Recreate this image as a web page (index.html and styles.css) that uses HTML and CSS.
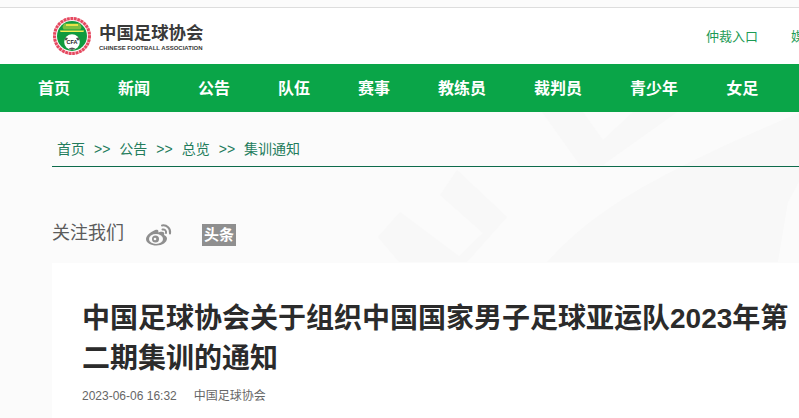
FILE: index.html
```html
<!DOCTYPE html>
<html lang="zh">
<head>
<meta charset="utf-8">
<title>中国足球协会</title>
<link rel="stylesheet" href="styles.css">
</head>
<body>
<header class="top">
  <div class="brand">
    <svg class="logo" width="38" height="38" viewBox="0 0 38 38">
      <circle cx="19" cy="19" r="19" fill="#f6b3bd"/>
      <circle cx="19" cy="19" r="17.500" fill="none" stroke="#e5485f" stroke-width="3" stroke-dasharray="2.500 1"/>
      <circle cx="19" cy="19" r="15.800" fill="#fff"/>
      <circle cx="19" cy="19" r="15" fill="#0f9a3e"/>
      <path d="M11 6.500h16l1.500 3.500-1 2.500h-17l-1-2.500z" fill="#7fbf3f"/>
      <path d="M13 7h12v2H13z" fill="#e8e24a"/>
      <path d="M7 13.500h24l-.5 1.500h-23z" fill="#f4ee55"/>
      <circle cx="19" cy="25" r="7.800" fill="#fff"/>
      <path d="M12.500 20.500l2.500.5-1.500 2.500-2-.5zM25.500 20.500l-2.500.5 1.500 2.500 2-.5zM15.500 31.500l3.500-1 3.500 1-3.500 1.500z" fill="#555"/>
      <text class="logo-cfa" x="19" y="27.200" text-anchor="middle">CFA</text>
    </svg>
    <div class="brand-text">
      <div class="brand-cn">中国足球协会</div>
      <div class="brand-en">CHINESE FOOTBALL ASSOCIATION</div>
    </div>
  </div>
  <nav class="quick">
    <a>仲裁入口</a>
    <a>媒体入口</a>
  </nav>
</header>
<nav class="main-nav">
  <a>首页</a><a>新闻</a><a>公告</a><a>队伍</a><a>赛事</a><a>教练员</a><a>裁判员</a><a>青少年</a><a>女足</a>
</nav>
<main class="content">
  <svg class="watermark" width="799" height="150" viewBox="0 112 799 150">
    <g fill="#f8f8f8">
      <path d="M542 112h41l20 28 30-28h44l-74 53h-23z"/>
      <path d="M547 262C590 215 640 180 799 113v149z"/>
      <path d="M457 170l50 47-40 45h-14l30-29-43-38 17-25z"/>
      <path d="M400 212l60 45-6 5h-55l-21-25z"/>
    </g>
    <path d="M778 262l10-60 11-20v80z" fill="#fbfbfb"/>
  </svg>
  <div class="crumbs">
    <a>首页</a><span>&gt;&gt;</span><a>公告</a><span>&gt;&gt;</span><a>总览</a><span>&gt;&gt;</span><a>集训通知</a>
  </div>
  <div class="follow">
    <span class="follow-label">关注我们</span>
    <svg class="weibo" width="26" height="23" viewBox="0 0 26 22">
      <path d="M10.500 6C5.500 7.500 0 12 0 15.500 0 19.500 5 22 10.500 22c6 0 10.500-3.300 10.500-7 0-2-1.800-3-3-3.500.8-2 .2-3.500-2.700-3.300-1 0-2.300.5-3 .8.400-2-.300-3.300-2.300-2.500z" fill="#8f8f8f"/>
      <ellipse cx="10" cy="15.500" rx="7" ry="5" fill="#fbfbfb"/>
      <circle cx="9.500" cy="15.500" r="3.500" fill="#8f8f8f"/>
      <circle cx="9" cy="15.500" r="1.300" fill="#fbfbfb"/>
      <path d="M16 2c4.500-1 9 3 8 8M16.500 6c2-.5 4 1 3.500 3.500" fill="none" stroke="#8f8f8f" stroke-width="2" stroke-linecap="round"/>
    </svg>
    <span class="toutiao">头条</span>
  </div>
  <article class="card">
    <h1>中国足球协会关于组织中国国家男子足球亚运队2023年第二期集训的通知</h1>
    <div class="meta"><span>2023-06-06 16:32</span><span>中国足球协会</span></div>
  </article>
</main>
</body>
</html>
```

FILE: styles.css
```css
* { box-sizing: border-box; }
html, body { margin: 0; padding: 0; height: 100%; overflow: hidden; }
body {
  width: 799px;
  height: 418px;
  background: #fbfbfb;
  font-family: "Liberation Sans", "Noto Sans CJK SC", sans-serif;
}
.top {
  margin-top: 7px;
  height: 57px;
  background: #fff;
  border-top: 1px solid #dddddd;
  display: flex;
  justify-content: space-between;
  align-items: flex-start;
  white-space: nowrap;
  width: 843px;
}
.brand { display: flex; align-items: center; margin: 9px 0 0 53px; gap: 8px; }
.logo { display: block; }
.logo-cfa { font-size: 5.500px; font-weight: 700; fill: #222; }
.brand-text { padding-top: 1px; }
.brand-cn { font-size: 17.400px; font-weight: 700; line-height: 22px; color: #3a3a3a; }
.brand-en { font-size: 6px; font-weight: 700; line-height: 8px; color: #3a3a3a; }
.quick { display: flex; gap: 33px; margin-top: 20px; }
.quick a { font-size: 13px; line-height: 18px; color: #1c9a55; }
.main-nav {
  height: 48px;
  width: 860px;
  background: #0aa548;
  display: flex;
  gap: 48px;
  padding: 0 0 2px 38px;
  align-items: center;
}
.main-nav a { font-size: 16px; font-weight: 700; color: #fff; white-space: nowrap; }
.content { position: relative; padding-left: 52px; width: 860px; }
.watermark { position: absolute; left: 0; top: 0; }
.crumbs {
  position: relative;
  height: 55px;
  padding: 27px 0 0 5px;
  border-bottom: 1px solid #0d6b4b;
  width: 808px;
  display: flex;
  gap: 9px;
  font-size: 14px;
  line-height: 20px;
  color: #237c5c;
}
.follow {
  position: relative;
  display: flex;
  align-items: center;
  height: 96px;
  padding-top: 36px;
}
.follow-label { font-size: 18px; line-height: 26px; color: #5c5c5c; width: 94px; }
.weibo { display: block; margin-top: 3px; }
.toutiao {
  margin: 3px 0 0 30px;
  width: 34px;
  height: 22px;
  background: #8f8f8f;
  color: #fff;
  font-size: 15px;
  font-weight: 700;
  line-height: 22px;
  text-align: center;
}
.card { position: relative; background: #fff; padding: 36px 0 0 30px; height: 156px; width: 808px; }
.card h1 {
  width: 712px;
  margin: 0;
  font-size: 28px;
  font-weight: 700;
  line-height: 40px;
  color: #2b2b2b;
}
.meta { display: flex; gap: 17px; margin-top: 8px; font-size: 12px; line-height: 18px; color: #666; }
```
